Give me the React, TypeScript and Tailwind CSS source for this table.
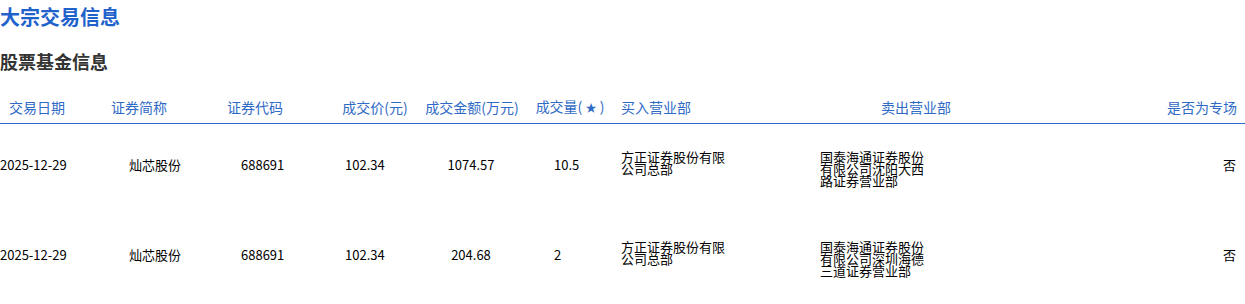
const font = { fontFamily: '"Noto Sans CJK SC", "Noto Sans", sans-serif' };

type Trade = {
  date: string;
  name: string;
  code: string;
  price: string;
  amount: string;
  volume: string;
  buyer: string;
  seller: string;
  special: string;
};

const trades: Trade[] = [
  {
    date: "2025-12-29",
    name: "灿芯股份",
    code: "688691",
    price: "102.34",
    amount: "1074.57",
    volume: "10.5",
    buyer: "方正证券股份有限公司总部",
    seller: "国泰海通证券股份有限公司沈阳大西路证券营业部",
    special: "否",
  },
  {
    date: "2025-12-29",
    name: "灿芯股份",
    code: "688691",
    price: "102.34",
    amount: "204.68",
    volume: "2",
    buyer: "方正证券股份有限公司总部",
    seller: "国泰海通证券股份有限公司深圳海德三道证券营业部",
    special: "否",
  },
];

function HeaderRow() {
  return (
    <div className="flex items-center border-b border-[#2a6acb] pt-[23px] pb-[6px] text-[14px] leading-[20px] text-[#2f6ac6] whitespace-nowrap">
      <div className="w-[74px] text-center">交易日期</div>
      <div className="ml-[30px] w-[70px] text-center">证券简称</div>
      <div className="ml-[46px] w-[70px] text-center">证券代码</div>
      <div className="ml-[45px] w-[80px] text-center">成交价(元)</div>
      <div className="ml-[5px] w-[104px] text-center">成交金额(万元)</div>
      <div className="ml-[6px] w-[80px] text-center">
        成交量( <span className="text-[11px]">★</span> )
      </div>
      <div className="ml-[6px] w-[80px] text-center">买入营业部</div>
      <div className="ml-[180px] w-[80px] text-center">卖出营业部</div>
      <div className="flex-1 pr-2 text-right">是否为专场</div>
    </div>
  );
}

function TradeRow({ t }: { t: Trade }) {
  return (
    <div className="flex h-[90px] items-start pt-[14px] text-[13px] text-black">
      <div className="w-[129px] leading-[28px]">{t.date}</div>
      <div className="w-[112px] leading-[28px]">{t.name}</div>
      <div className="w-[104px] leading-[28px]">{t.code}</div>
      <div className="w-[75px] leading-[28px]">{t.price}</div>
      <div className="w-[102px] text-center leading-[28px]">{t.amount}</div>
      <div className="ml-[32px] w-[67px] leading-[28px]">{t.volume}</div>
      <div className="w-[199px]">
        <div className="w-[108px] leading-[12px]">{t.buyer}</div>
      </div>
      <div className="w-[108px] leading-[12px]">{t.seller}</div>
      <div className="flex-1 pr-[9px] text-right leading-[28px]">{t.special}</div>
    </div>
  );
}

export default function App() {
  return (
    <div className="w-[1245px] h-[304px] bg-white overflow-hidden" style={font}>
      <h1 className="mt-[4px] text-[20px] font-bold leading-[26px] text-[#1f62cc]">
        大宗交易信息
      </h1>
      <h2 className="mt-[19px] text-[18px] font-bold leading-[24px] text-[#333333]">
        股票基金信息
      </h2>
      <HeaderRow />
      <div className="mt-[13px]">
        {trades.map((t, i) => (
          <TradeRow key={i} t={t} />
        ))}
      </div>
    </div>
  );
}
